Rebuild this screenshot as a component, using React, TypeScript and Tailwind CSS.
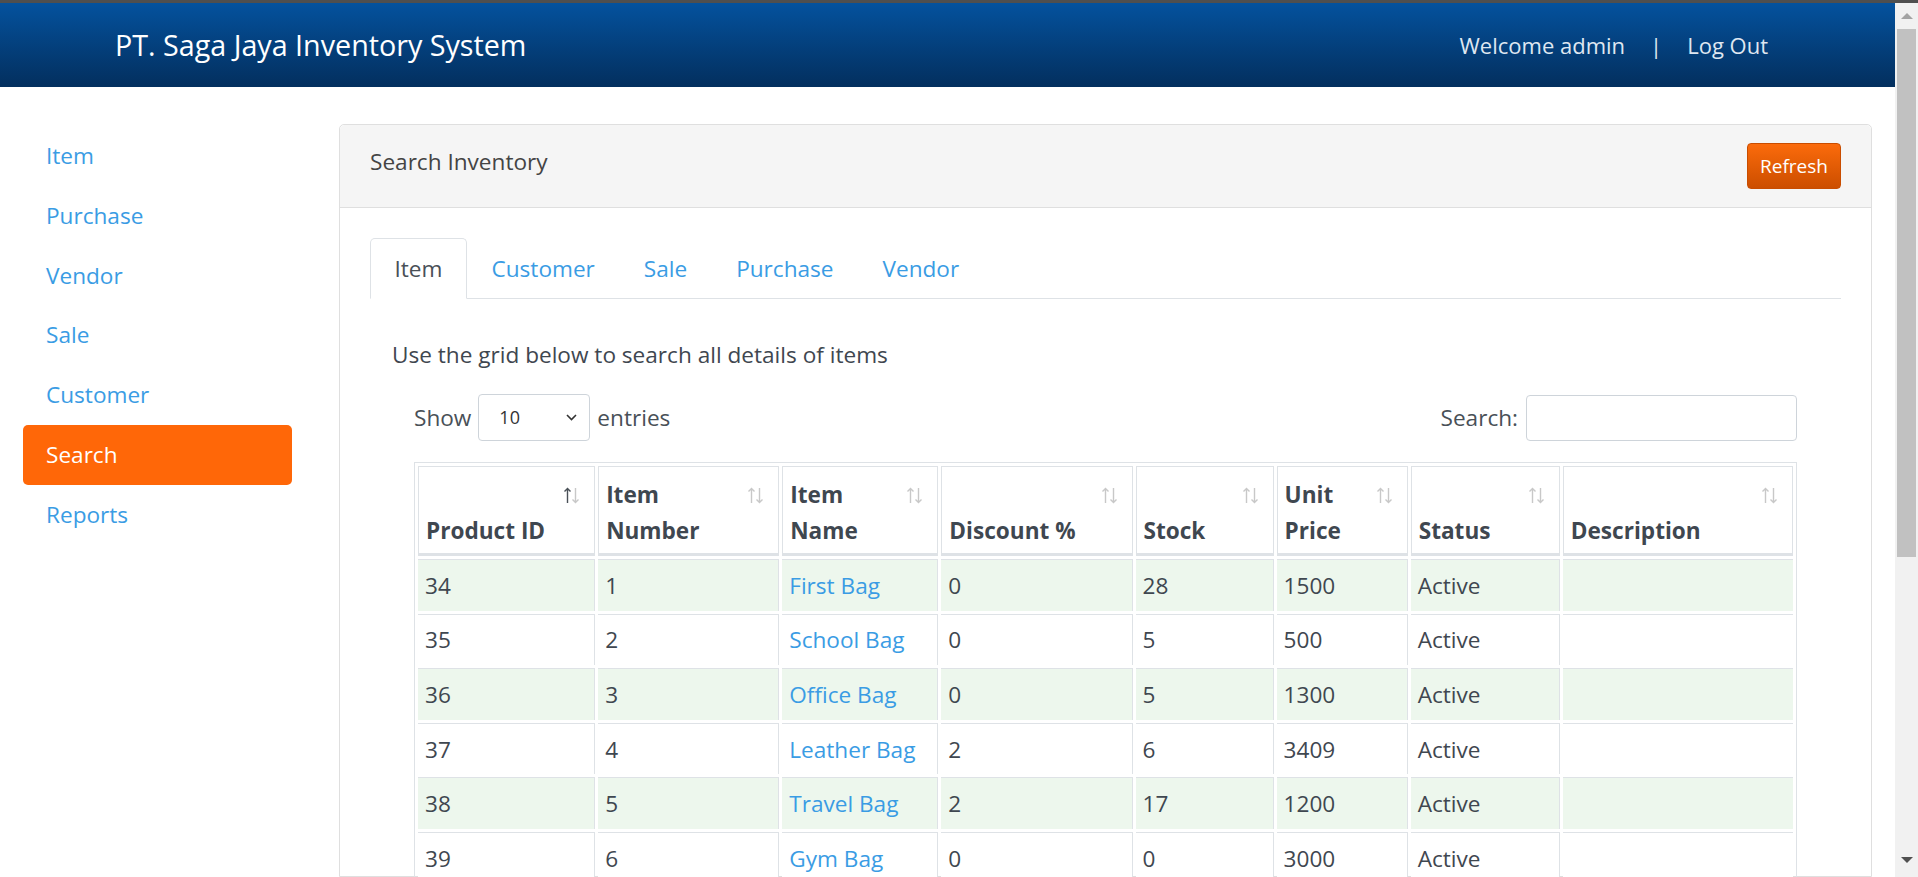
import React from "react";

const rows = [
  { id: 34, num: 1, name: "First Bag", disc: 0, stock: 28, price: 1500, status: "Active" },
  { id: 35, num: 2, name: "School Bag", disc: 0, stock: 5, price: 500, status: "Active" },
  { id: 36, num: 3, name: "Office Bag", disc: 0, stock: 5, price: 1300, status: "Active" },
  { id: 37, num: 4, name: "Leather Bag", disc: 2, stock: 6, price: 3409, status: "Active" },
  { id: 38, num: 5, name: "Travel Bag", disc: 2, stock: 17, price: 1200, status: "Active" },
  { id: 39, num: 6, name: "Gym Bag", disc: 0, stock: 0, price: 3000, status: "Active" },
];

const sideLinks = ["Item", "Purchase", "Vendor", "Sale", "Customer", "Search", "Reports"];
const tabs = ["Item", "Customer", "Sale", "Purchase", "Vendor"];

function SortIcon({ active }: { active?: boolean }) {
  return (
    <svg width="18" height="17" viewBox="0 0 18 17" fill="none" strokeWidth="1.4">
      <g stroke={active ? "#495057" : "#c8c8c8"}>
        <path d="M4.5 16V1.5M1.5 4.5L4.5 1.5L7.5 4.5" />
      </g>
      <g stroke="#c8c8c8">
        <path d="M12.5 1V15.5M9.5 12.5L12.5 15.5L15.5 12.5" />
      </g>
    </svg>
  );
}

function HeadCell({ w, lines, active }: { w: string; lines: string[]; active?: boolean }) {
  return (
    <th className={`${w} border border-[#dee2e6] border-b-[3px] pl-[7px] pr-[13px] pt-[10px] pb-[4px] text-left align-bottom font-bold text-[#3f4750]`}>
      <div className="flex h-[72px] justify-between">
        <span className="self-end whitespace-nowrap">
          {lines.map((l, i) => (
            <React.Fragment key={i}>
              {i > 0 && <br />}
              {l}
            </React.Fragment>
          ))}
        </span>
        <span className="flex h-[36px] items-center self-start">
          <SortIcon active={active} />
        </span>
      </div>
    </th>
  );
}

function Scrollbar() {
  return (
    <div className="flex w-[23px] shrink-0 flex-col bg-[#f1f1f1]">
      <div className="flex h-[26px] items-center justify-center">
        <div className="h-0 w-0 border-x-[6px] border-b-[6px] border-x-transparent border-b-[#a3a3a3]" />
      </div>
      <div className="mx-[2px] h-[528px] bg-[#c1c1c1]" />
      <div className="flex-1" />
      <div className="flex h-[20px] items-start justify-center">
        <div className="h-0 w-0 border-x-[6px] border-t-[6px] border-x-transparent border-t-[#505050]" />
      </div>
    </div>
  );
}

export default function App() {
  return (
    <div className="flex h-screen flex-col overflow-hidden bg-white font-['Open_Sans',sans-serif] text-[22.6px] text-[#495057]">
      <div className="h-[3px] shrink-0 bg-[#4f4f4f]" />
      <div className="flex min-h-0 flex-1">
        <div className="flex min-w-0 flex-1 flex-col">
          <header className="flex h-[84px] shrink-0 items-center justify-between bg-gradient-to-b from-[#04529e] to-[#032f5e] pl-[115px] pr-[127px]">
            <span className="text-[28.7px] text-white">PT. Saga Jaya Inventory System</span>
            <div className="flex items-center text-[22px] text-[#dfe7f1]">
              <span>Welcome admin</span>
              <span className="mx-[25px]">|</span>
              <span>Log Out</span>
            </div>
          </header>

          <div className="flex min-h-0 flex-1 gap-[47px] px-[23px] pt-[37px]">
            <nav className="w-[269px] shrink-0 pt-[2.5px]">
              <ul className="flex flex-col">
                {sideLinks.map((l) => (
                  <li
                    key={l}
                    className={`flex h-[59.7px] items-center rounded-[5px] px-[23px] ${
                      l === "Search" ? "bg-[#ff6708] text-white" : "text-[#3a9ce4]"
                    }`}
                  >
                    {l}
                  </li>
                ))}
              </ul>
            </nav>

            <section className="min-w-0 flex-1 rounded-t-[5px] border border-[#dfdfdf]">
              <div className="flex h-[83px] items-center justify-between rounded-t-[5px] border-b border-[#dfdfdf] bg-[#f5f5f5] px-[30px]">
                <span className="mb-[9px] text-[#444]">Search Inventory</span>
                <button className="h-[46px] rounded-[4px] border border-[#c94d00] bg-gradient-to-b from-[#fb6b0c] to-[#cc4e00] px-[12px] text-[19px] text-white">
                  Refresh
                </button>
              </div>

              <div className="px-[30px] pt-[30px]">
                <div className="flex border-b border-[#dee2e6]">
                  {tabs.map((t, i) => (
                    <div
                      key={t}
                      className={`-mb-px rounded-t-[5px] border px-[23.5px] py-[13px] leading-[33px] ${
                        i === 0
                          ? "border-[#dee2e6] border-b-white bg-white text-[#495057]"
                          : "border-transparent text-[#3a9ce4]"
                      }`}
                    >
                      {t}
                    </div>
                  ))}
                </div>

                <div className="px-[22px]">
                  <p className="pt-[39px] leading-[33px] text-[#3f4750]">
                    Use the grid below to search all details of items
                  </p>

                  <div className="pl-[22px] pr-[22px]">
                    <div className="mt-[23px] flex h-[47px] items-center justify-between">
                      <div className="flex items-center">
                        <span>Show</span>
                        <div className="ml-[7px] flex h-[47px] w-[112px] items-center justify-between rounded-[4px] border border-[#ced4da] pl-[20px] pr-[12px] text-[18px] text-[#333]">
                          <span>10</span>
                          <svg width="11" height="7" viewBox="0 0 11 7" fill="none">
                            <path d="M1 1L5.5 5.5L10 1" stroke="#333" strokeWidth="1.6" />
                          </svg>
                        </div>
                        <span className="ml-[7px]">entries</span>
                      </div>
                      <div className="flex items-center">
                        <span>Search:</span>
                        <div className="ml-[8px] h-[46px] w-[271px] rounded-[4px] border border-[#ced4da]" />
                      </div>
                    </div>

                    <table className="mt-[21px] w-full table-fixed border-separate border-spacing-[3px] border border-[#dee2e6]">
                      <thead>
                        <tr className="leading-[36px]">
                          <HeadCell w="w-[177px]" lines={["Product ID"]} active />
                          <HeadCell w="w-[181px]" lines={["Item", "Number"]} />
                          <HeadCell w="w-[156px]" lines={["Item", "Name"]} />
                          <HeadCell w="w-[191px]" lines={["Discount %"]} />
                          <HeadCell w="w-[138px]" lines={["Stock"]} />
                          <HeadCell w="w-[131px]" lines={["Unit", "Price"]} />
                          <HeadCell w="w-[149px]" lines={["Status"]} />
                          <HeadCell w="w-[230px]" lines={["Description"]} />
                        </tr>
                      </thead>
                      <tbody>
                        {rows.map((r, i) => {
                          const bg = i % 2 === 0 ? "bg-[#edf7ed]" : "bg-white";
                          const cell = `${bg} border-t border-r border-[#dee2e6] px-[7px] py-[8.8px] leading-[33px] text-[#3f4750]`;
                          return (
                            <tr key={r.id}>
                              <td className={cell}>{r.id}</td>
                              <td className={cell}>{r.num}</td>
                              <td className={`${cell} !text-[#3a9ce4] whitespace-nowrap`}>{r.name}</td>
                              <td className={cell}>{r.disc}</td>
                              <td className={cell}>{r.stock}</td>
                              <td className={cell}>{r.price}</td>
                              <td className={cell}>{r.status}</td>
                              <td className={`${bg} border-t border-[#dee2e6] px-[7px] py-[8.8px] leading-[33px]`}></td>
                            </tr>
                          );
                        })}
                      </tbody>
                    </table>
                  </div>
                </div>
              </div>
            </section>
          </div>
        </div>
        <Scrollbar />
      </div>
    </div>
  );
}
